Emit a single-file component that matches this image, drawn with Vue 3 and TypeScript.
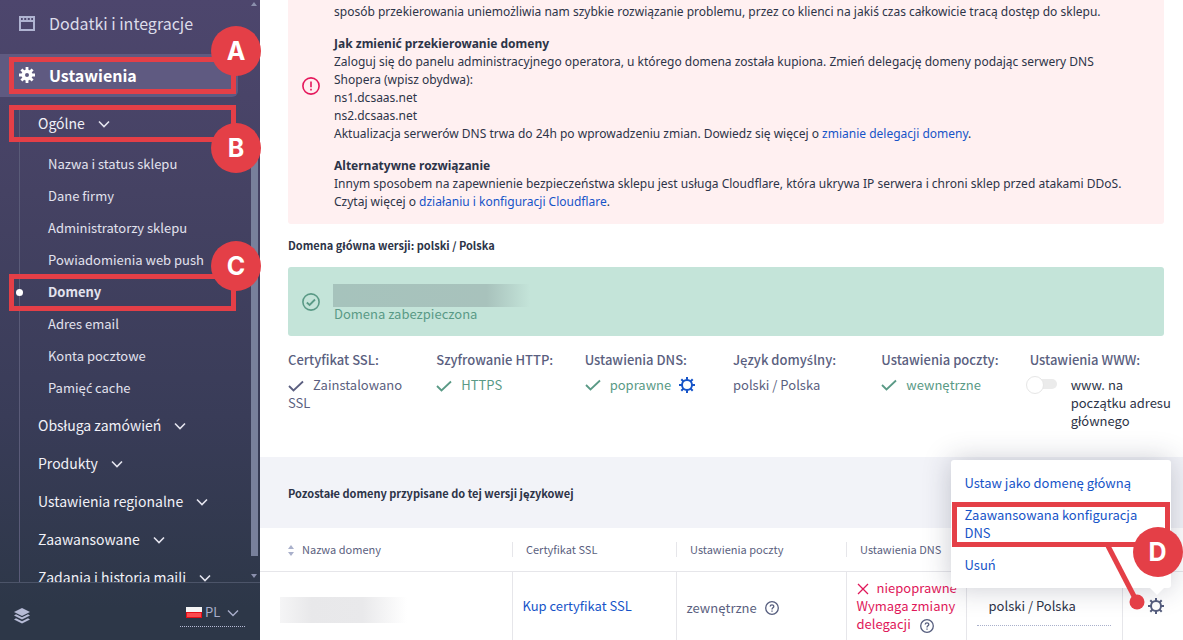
<script setup lang="ts">
import { h, ref } from 'vue'
import type { VNodeChild } from 'vue'

interface NavGroup {
  label: string
}

// Letters whose precomposed form the main family lacks are set in a family that has them.
const Txt = (props: { t: string }): VNodeChild[] =>
  props.t.split(/([ćśźż])/).map((part) => (/^[ćśźż]$/.test(part) ? h('span', { class: 'accented' }, part) : part))
Txt.props = ['t']

const subItems: string[] = [
  'Nazwa i status sklepu',
  'Dane firmy',
  'Administratorzy sklepu',
  'Powiadomienia web push',
  'Domeny',
  'Adres email',
  'Konta pocztowe',
  'Pamięć cache',
]
const activeItem = ref('Domeny')
const groups: NavGroup[] = [
  { label: 'Obsługa zamówień' },
  { label: 'Produkty' },
  { label: 'Ustawienia regionalne' },
  { label: 'Zaawansowane' },
  { label: 'Zadania i historia maili' },
]
const language = ref('PL')
const version = ref('polski / Polska')
const www = ref(false)
</script>

<template>
  <div class="page">
    <aside class="sidebar">
      <nav class="nav">
        <a class="top-link" href="#">
          <svg class="icon16" viewBox="0 0 16 16" fill="none" stroke="#b0b4d2" stroke-width="2">
            <path d="M1 2H15V15H1ZM1 6H15" />
            <path d="M4.500 1V5M8 1V5M11.500 1V5" stroke-width="1.500" />
          </svg>
          <span>Dodatki i integracje</span>
        </a>
        <a class="top-link selected" href="#">
          <svg class="icon16" viewBox="0 0 16 16">
            <g fill="#fff">
              <path
                fill-rule="evenodd"
                d="M8 2.500a5.500 5.500 0 1 0 0 11a5.500 5.500 0 0 0 0-11ZM8 6a2 2 0 1 1 0 4a2 2 0 0 1 0-4Z"
              />
              <path
                d="M6.600 0H9.400V3H6.600ZM6.600 13H9.400V16H6.600ZM0 6.600H3V9.400H0ZM13 6.600H16V9.400H13ZM1.400 3.400L3.400 1.400L5.500 3.500L3.500 5.500ZM12.600 1.400L14.600 3.400L12.500 5.500L10.500 3.500ZM1.400 12.600L3.500 10.500L5.500 12.500L3.400 14.600ZM12.500 10.500L14.600 12.600L12.600 14.600L10.500 12.500Z"
              />
            </g>
          </svg>
          <span>Ustawienia</span>
        </a>
        <div class="tree">
          <button class="group first" type="button">
            Ogólne
            <svg class="chev" viewBox="0 0 12 8"><path d="M1 1.500L6 6.500L11 1.500" /></svg>
          </button>
          <ul class="subs">
            <li v-for="item in subItems" :key="item" :class="{ active: item === activeItem }">
              <a href="#" @click.prevent="activeItem = item"><Txt :t="item" /></a>
            </li>
          </ul>
          <button v-for="g in groups" :key="g.label" class="group" type="button">
            {{ g.label }}
            <svg class="chev" viewBox="0 0 12 8"><path d="M1 1.500L6 6.500L11 1.500" /></svg>
          </button>
        </div>
      </nav>
      <div class="scroll">
        <svg viewBox="0 0 6 4"><path d="M0 4L3 0L6 4Z" /></svg>
        <div class="thumb"></div>
        <svg viewBox="0 0 6 4"><path d="M0 0L3 4L6 0Z" /></svg>
      </div>
      <footer class="foot">
        <svg class="icon16" viewBox="0 0 16 16" fill="#b6bbd6">
          <path d="M8 0L16 4L8 8L0 4Z" />
          <path d="M2 6.200L8 9.200L14 6.200L16 7.400L8 11.400L0 7.400Z" />
          <path d="M2 10.200L8 13.200L14 10.200L16 11.400L8 15.600L0 11.400Z" />
        </svg>
        <label class="lang">
          <svg class="flag" viewBox="0 0 16 11">
            <rect width="16" height="11" fill="#f5f5f5" />
            <rect y="5" width="16" height="6" fill="#e60f18" />
            <rect x="1" y="6" width="14" height="4" fill="#fb4b4f" />
          </svg>
          <select v-model="language" aria-label="Język">
            <option>PL</option>
          </select>
          <svg class="chev" viewBox="0 0 12 8"><path d="M1 1.500L6 6.500L11 1.500" /></svg>
        </label>
      </footer>
      <div class="mark mark-a"><b>A</b></div>
      <div class="mark mark-b"><b>B</b></div>
      <div class="mark mark-c"><b>C</b></div>
    </aside>

    <main class="main">
      <section class="alert">
        <svg class="round" viewBox="0 0 18 18" fill="none" stroke="#e5185c" stroke-width="1.600">
          <circle cx="9" cy="9" r="8.100" />
          <path d="M9 4.500V10.200M9 11.800V13.400" />
        </svg>
        <div class="copy">
          <p>
            sposób przekierowania uniemożliwia nam szybkie rozwiązanie problemu, przez co klienci na jakiś czas
            całkowicie tracą dostęp do sklepu.
          </p>
          <p>
            <strong>Jak zmienić przekierowanie domeny</strong><br />
            Zaloguj się do panelu administracyjnego operatora, u którego domena została kupiona. Zmień delegację
            domeny podając serwery DNS<br />Shopera (wpisz obydwa):<br />
            ns1.dcsaas.net<br />
            ns2.dcsaas.net<br />
            Aktualizacja serwerów DNS trwa do 24h po wprowadzeniu zmian. Dowiedz się więcej o
            <a href="#">zmianie delegacji domeny</a>.
          </p>
          <p>
            <strong>Alternatywne rozwiązanie</strong><br />
            Innym sposobem na zapewnienie bezpieczeństwa sklepu jest usługa Cloudflare, która ukrywa IP serwera i
            chroni sklep przed atakami DDoS.<br />
            Czytaj więcej o <a href="#">działaniu i konfiguracji Cloudflare</a>.
          </p>
        </div>
      </section>

      <h2 class="heading">Domena główna wersji: polski / Polska</h2>

      <section class="secure">
        <svg class="round" viewBox="0 0 18 18" fill="none" stroke="#5a9a86" stroke-width="1.600">
          <circle cx="9" cy="9" r="8.100" />
          <path d="M4.800 9.500L7.600 12L13 6.500" stroke-width="1.800" />
        </svg>
        <div class="secure-copy">
          <div class="hidden-name"></div>
          <p>Domena zabezpieczona</p>
        </div>
      </section>

      <section class="facts">
        <div>
          <h3>Certyfikat SSL:</h3>
          <p><svg class="tick" viewBox="0 0 16 12"><path d="M1 6L5.500 10.500L15 1.500" /></svg>Zainstalowano SSL</p>
        </div>
        <div class="ok">
          <h3>Szyfrowanie HTTP:</h3>
          <p><svg class="tick" viewBox="0 0 16 12"><path d="M1 6L5.500 10.500L15 1.500" /></svg>HTTPS</p>
        </div>
        <div class="ok">
          <h3>Ustawienia DNS:</h3>
          <p class="row">
            <svg class="tick" viewBox="0 0 16 12"><path d="M1 6L5.500 10.500L15 1.500" /></svg>poprawne
            <button class="gear blue" type="button" aria-label="Konfiguracja DNS">
              <svg class="icon16" viewBox="0 0 16 16">
                <circle cx="8" cy="8" r="5" />
                <path d="M8 0V3M8 13V16M0 8H3M13 8H16M2.300 2.300L4.500 4.500M11.500 11.500L13.700 13.700M13.700 2.300L11.500 4.500M4.500 11.500L2.300 13.700" />
              </svg>
            </button>
          </p>
        </div>
        <div>
          <h3><Txt t="Język domyślny:" /></h3>
          <p>polski / Polska</p>
        </div>
        <div class="ok">
          <h3>Ustawienia poczty:</h3>
          <p class="row"><svg class="tick" viewBox="0 0 16 12"><path d="M1 6L5.500 10.500L15 1.500" /></svg>wewnętrzne</p>
        </div>
        <div>
          <h3>Ustawienia WWW:</h3>
          <label class="switch">
            <input v-model="www" type="checkbox" />
            <span>www. na początku adresu głównego</span>
          </label>
        </div>
      </section>

      <section class="band">
        <h2 class="heading">Pozostałe domeny przypisane do tej wersji językowej</h2>
      </section>

      <table class="domains">
        <colgroup>
          <col class="c1" /><col class="c2" /><col class="c3" /><col class="c4" /><col class="c5" /><col />
        </colgroup>
        <thead>
          <tr>
            <th>
              <svg class="sort" viewBox="0 0 6 11"><path d="M0 4L3 0L6 4ZM0 7L3 11L6 7Z" /></svg>Nazwa domeny
            </th>
            <th>Certyfikat SSL</th>
            <th>Ustawienia poczty</th>
            <th>Ustawienia DNS</th>
            <th></th>
            <th></th>
          </tr>
        </thead>
        <tbody>
          <tr>
            <td><div class="hidden-domain"></div></td>
            <td><a href="#">Kup certyfikat SSL</a></td>
            <td>
              <span class="mail">
                zewnętrzne
                <svg class="help" viewBox="0 0 14 14">
                  <circle cx="7" cy="7" r="6.300" />
                  <path d="M5.200 5.600C5.200 3.300 8.800 3.300 8.800 5.500C8.800 6.800 7 6.900 7 8.400M7 9.600V10.800" />
                </svg>
              </span>
            </td>
            <td class="bad">
              <svg class="cross" viewBox="0 0 12 12"><path d="M1 1L11 11M11 1L1 11" /></svg>niepoprawne<br />
              Wymaga zmiany delegacji
              <svg class="help" viewBox="0 0 14 14">
                <circle cx="7" cy="7" r="6.300" />
                <path d="M5.200 5.600C5.200 3.300 8.800 3.300 8.800 5.500C8.800 6.800 7 6.900 7 8.400M7 9.600V10.800" />
              </svg>
            </td>
            <td>
              <select v-model="version" class="version" aria-label="Wersja językowa">
                <option>polski / Polska</option>
              </select>
            </td>
            <td>
              <div class="actions">
                <button class="gear" type="button" aria-label="Akcje">
                  <svg class="icon16" viewBox="0 0 16 16">
                    <circle cx="8" cy="8" r="5" />
                    <path d="M8 0V3M8 13V16M0 8H3M13 8H16M2.300 2.300L4.500 4.500M11.500 11.500L13.700 13.700M13.700 2.300L11.500 4.500M4.500 11.500L2.300 13.700" />
                  </svg>
                </button>
                <div class="menu">
                  <a href="#">Ustaw jako domenę główną</a>
                  <a href="#">Zaawansowana konfiguracja DNS</a>
                  <a href="#">Usuń</a>
                  <svg class="pointer" viewBox="0 0 40 64">
                    <path d="M4 0L33 56" stroke="#e43f47" stroke-width="5" />
                    <circle cx="33" cy="56" r="7.500" fill="#e43f47" />
                  </svg>
                  <div class="mark mark-d"><b>D</b></div>
                </div>
              </div>
            </td>
          </tr>
        </tbody>
      </table>
    </main>
  </div>
</template>

<style>
body {
  margin: 0;
}
.accented {
  font-family: 'Noto Sans', sans-serif;
}
</style>

<style scoped>
.page {
  display: flex;
  height: 100vh;
  overflow: hidden;
  background: #fff;
  color: #2d3448;
  font-family: 'Noto Sans CJK SC', 'Noto Sans', sans-serif;
  font-size: 13px;
  line-height: 18px;
}
* {
  box-sizing: border-box;
}
p,
h2,
h3,
ul {
  margin: 0;
  padding: 0;
}
a {
  color: #1654c8;
  text-decoration: none;
}
button,
select {
  border: 0;
  margin: 0;
  padding: 0;
  background: none;
  color: inherit;
  font: inherit;
  appearance: none;
}
svg {
  flex: none;
}
.icon16 {
  display: block;
  width: 16px;
  height: 16px;
}

.sidebar {
  position: relative;
  z-index: 2;
  flex: none;
  display: grid;
  grid-template-columns: 1fr 9px;
  grid-template-rows: minmax(0, 1fr) 58px;
  width: 260px;
  background: linear-gradient(#4d466d 0, #454263 30%, #393c58 65%, #2d3748 95%);
}
.nav {
  overflow: hidden;
}
.top-link {
  display: flex;
  align-items: center;
  gap: 14px;
  height: 43px;
  margin-right: 13px;
  padding: 0 0 2px 19px;
  color: #dcdcea;
  font-size: 16px;
}
.top-link:first-child {
  margin: 2px 0 9px;
}
.top-link.selected {
  border-radius: 0 6px 6px 0;
  background: #5f5a81;
  color: #fff;
  font-weight: 700;
}
.tree {
  margin: 12px 0 0 19px;
  border-left: 1px solid #5a5b78;
}
.group {
  display: flex;
  align-items: center;
  gap: 13px;
  height: 38px;
  padding: 0 0 2px 18px;
  color: #f1f1f7;
  font-size: 14px;
  white-space: nowrap;
}
.group.first {
  height: 30px;
}
.chev {
  width: 12px;
  height: 8px;
  margin-top: 2px;
  fill: none;
  stroke: #e4e4ee;
  stroke-width: 1.600;
}
.subs {
  padding: 9px 0 3px;
  list-style: none;
}
.subs li {
  position: relative;
  height: 32px;
  padding-left: 28px;
  line-height: 32px;
}
.subs a {
  color: #e2e2ee;
}
.subs .active {
  font-weight: 700;
}
.subs .active::before {
  content: '';
  position: absolute;
  left: -4px;
  top: 13px;
  width: 7px;
  height: 7px;
  border-radius: 50%;
  background: #fff;
}
.scroll {
  display: flex;
  flex-direction: column;
  justify-content: space-between;
  padding: 2px 2px 4px 0;
}
.scroll svg {
  width: 6px;
  height: 4px;
  fill: #8b90ad;
}
.thumb {
  flex: 1;
  margin: 142px 0 18px;
  background: #78809b;
}
.foot {
  grid-column: 1 / 3;
  display: flex;
  align-items: flex-start;
  justify-content: space-between;
  border-top: 1px solid #4c5469;
  padding: 16px 15px 0 14px;
}
.foot > .icon16 {
  margin-top: 9px;
}
.lang {
  display: flex;
  align-items: center;
  gap: 3px;
  width: 65px;
  height: 28px;
  padding: 0 0 1px 6px;
  border-bottom: 1px dotted #b6bbd6;
  color: #a9aecb;
}
.lang .chev {
  stroke: #a9aecb;
  stroke-width: 1.400;
}
.lang select {
  width: 19px;
}
.flag {
  width: 16px;
  height: 11px;
}

.mark {
  position: absolute;
  border: 5px solid #e43f47;
  pointer-events: none;
}
.mark b {
  position: absolute;
  display: grid;
  place-items: center;
  width: 50px;
  height: 50px;
  border-radius: 50%;
  background: #e43f47;
  color: #fff;
  font: 700 25px/50px Inter, sans-serif;
}
.mark-a,
.mark-b,
.mark-c {
  left: 9px;
  right: 24px;
  height: 37px;
}
.mark-a {
  top: 57px;
}
.mark-b {
  top: 105px;
}
.mark-c {
  top: 274px;
}
.mark-a b,
.mark-c b {
  right: -30px;
  top: -36px;
}
.mark-b b {
  right: -30px;
  top: 13px;
}
.mark-c b {
  top: -38px;
}

.main {
  flex: 1;
  min-width: 0;
  overflow: hidden;
}
.alert,
.secure {
  display: flex;
  align-items: center;
  gap: 14px;
  margin: 0 19px 0 28px;
  border-radius: 3px;
}
.alert {
  margin-top: -52px;
  padding: 55px 14px 13px;
  background: #fff0f1;
  font-family: 'Noto Sans', sans-serif;
  font-size: 12px;
}
.alert p + p {
  margin-top: 14px;
}
.alert .round {
  margin-bottom: 42px;
}
.round {
  width: 18px;
  height: 18px;
}
.heading {
  font-size: 11px;
  line-height: 18px;
  font-weight: 700;
}
.alert + .heading {
  margin: 12px 28px 13px;
}
.secure {
  padding: 13px 14px;
  background: #c4e4d9;
  color: #5a9a86;
}
.secure-copy {
  padding-top: 4px;
}
.hidden-name {
  width: 197px;
  height: 23px;
  margin: 0 0 -2px -1px;
  background: linear-gradient(90deg, #a6c3bc 0, #a8c2bc 78%, #c4e4d9 100%);
}
.facts {
  display: grid;
  grid-template-columns: repeat(6, 1fr);
  padding: 15px 5px 27px 28px;
  color: #5b5f80;
}
.facts h3 {
  margin-bottom: 7px;
  font-size: 13px;
  font-weight: 500;
}
.facts p {
  padding-right: 20px;
}
.facts .ok p {
  color: #5a9a86;
}
.tick {
  width: 16px;
  height: 12px;
  margin-right: 9px;
  vertical-align: -2px;
  fill: none;
  stroke: currentColor;
  stroke-width: 1.800;
}
.row {
  display: flex;
  align-items: center;
}
.gear {
  cursor: pointer;
}
.gear svg {
  fill: none;
  stroke: #565e7e;
  stroke-width: 2;
}
.gear.blue {
  margin-left: 8px;
}
.gear.blue svg {
  stroke: #1654c8;
}
.switch {
  display: flex;
  align-items: flex-start;
  gap: 14px;
  margin-left: -4px;
  color: #2d3448;
}
.switch input {
  position: relative;
  flex: none;
  width: 28px;
  height: 10px;
  margin: 3px 0 0 3px;
  border-radius: 5px;
  background: #ebebeb;
  appearance: none;
}
.switch input::before {
  content: '';
  position: absolute;
  left: -3px;
  top: -3px;
  width: 16px;
  height: 16px;
  border: 1px solid #e6e6e6;
  border-radius: 50%;
  background: #fff;
}
.band {
  padding: 27px 28px 26px;
  background: #f2f3f8;
}

.domains {
  width: 100%;
  table-layout: fixed;
  border-collapse: collapse;
}
.c1 {
  width: 252px;
}
.c2 {
  width: 164px;
}
.c3 {
  width: 170px;
}
.c4 {
  width: 120px;
}
.c5 {
  width: 156px;
}
.domains th {
  height: 43px;
  padding: 0 0 0 14px;
  border-bottom: 1px solid #e6e6ea;
  background: linear-gradient(#e6e6ea, #e6e6ea) 0 50% / 1px 15px no-repeat;
  color: #5b5f80;
  font-size: 11px;
  font-weight: 400;
  text-align: left;
}
.domains th:first-child {
  padding-left: 28px;
  background: none;
}
.sort {
  width: 6px;
  height: 11px;
  margin-right: 8px;
  vertical-align: -2px;
  fill: #a9b0cb;
}
.domains td {
  height: 84px;
  padding: 7px 0 0 10px;
  border-left: 1px solid #e6e6ea;
  vertical-align: top;
}
.domains td:first-child {
  padding: 25px 0 0 20px;
  border-left: 0;
}
.domains td:nth-child(2),
.domains td:nth-child(3),
.domains td:nth-child(5) {
  padding-top: 25px;
}
.domains td:nth-child(6) {
  padding-top: 26px;
}
.hidden-domain {
  width: 127px;
  height: 26px;
  background: linear-gradient(90deg, #f5f5f6 0, #e8e8ea 25%, #e9e9eb 65%, #fff 100%);
}
.mail {
  display: flex;
  align-items: center;
  gap: 8px;
  padding-top: 2px;
  color: #5b5f80;
}
.help {
  width: 14px;
  height: 14px;
  fill: none;
  stroke: #565e7e;
  stroke-width: 1.300;
}
.bad {
  color: #e0185a;
}
.bad .help {
  margin-left: 6px;
  vertical-align: -4px;
}
.cross {
  width: 12px;
  height: 12px;
  margin-right: 8px;
  vertical-align: -2px;
  stroke: currentColor;
  stroke-width: 1.300;
}
.version {
  display: block;
  width: 134px;
  height: 29px;
  padding: 0 0 10px 12px;
  border-bottom: 1px dotted #a9b0cb;
}
.actions {
  position: relative;
  width: 16px;
  margin-left: 15px;
}
.menu {
  position: absolute;
  right: -7px;
  bottom: 30px;
  display: flex;
  flex-direction: column;
  gap: 14px;
  width: 220px;
  padding: 14px;
  border-radius: 3px;
  background: #fff;
  box-shadow: 0 0 28px rgba(40, 44, 70, 0.25);
}
.menu::after {
  content: '';
  position: absolute;
  right: 7px;
  top: 100%;
  border: 7px solid transparent;
  border-top-color: #fff;
  border-bottom: 0;
}
.pointer {
  position: absolute;
  left: 153px;
  top: 86px;
  width: 40px;
  height: 64px;
  overflow: visible;
  z-index: 1;
}
.mark-d {
  left: 1px;
  right: 1px;
  top: 42px;
  height: 45px;
  z-index: 2;
}
.mark-d b {
  right: -18px;
  top: 20px;
}
</style>
